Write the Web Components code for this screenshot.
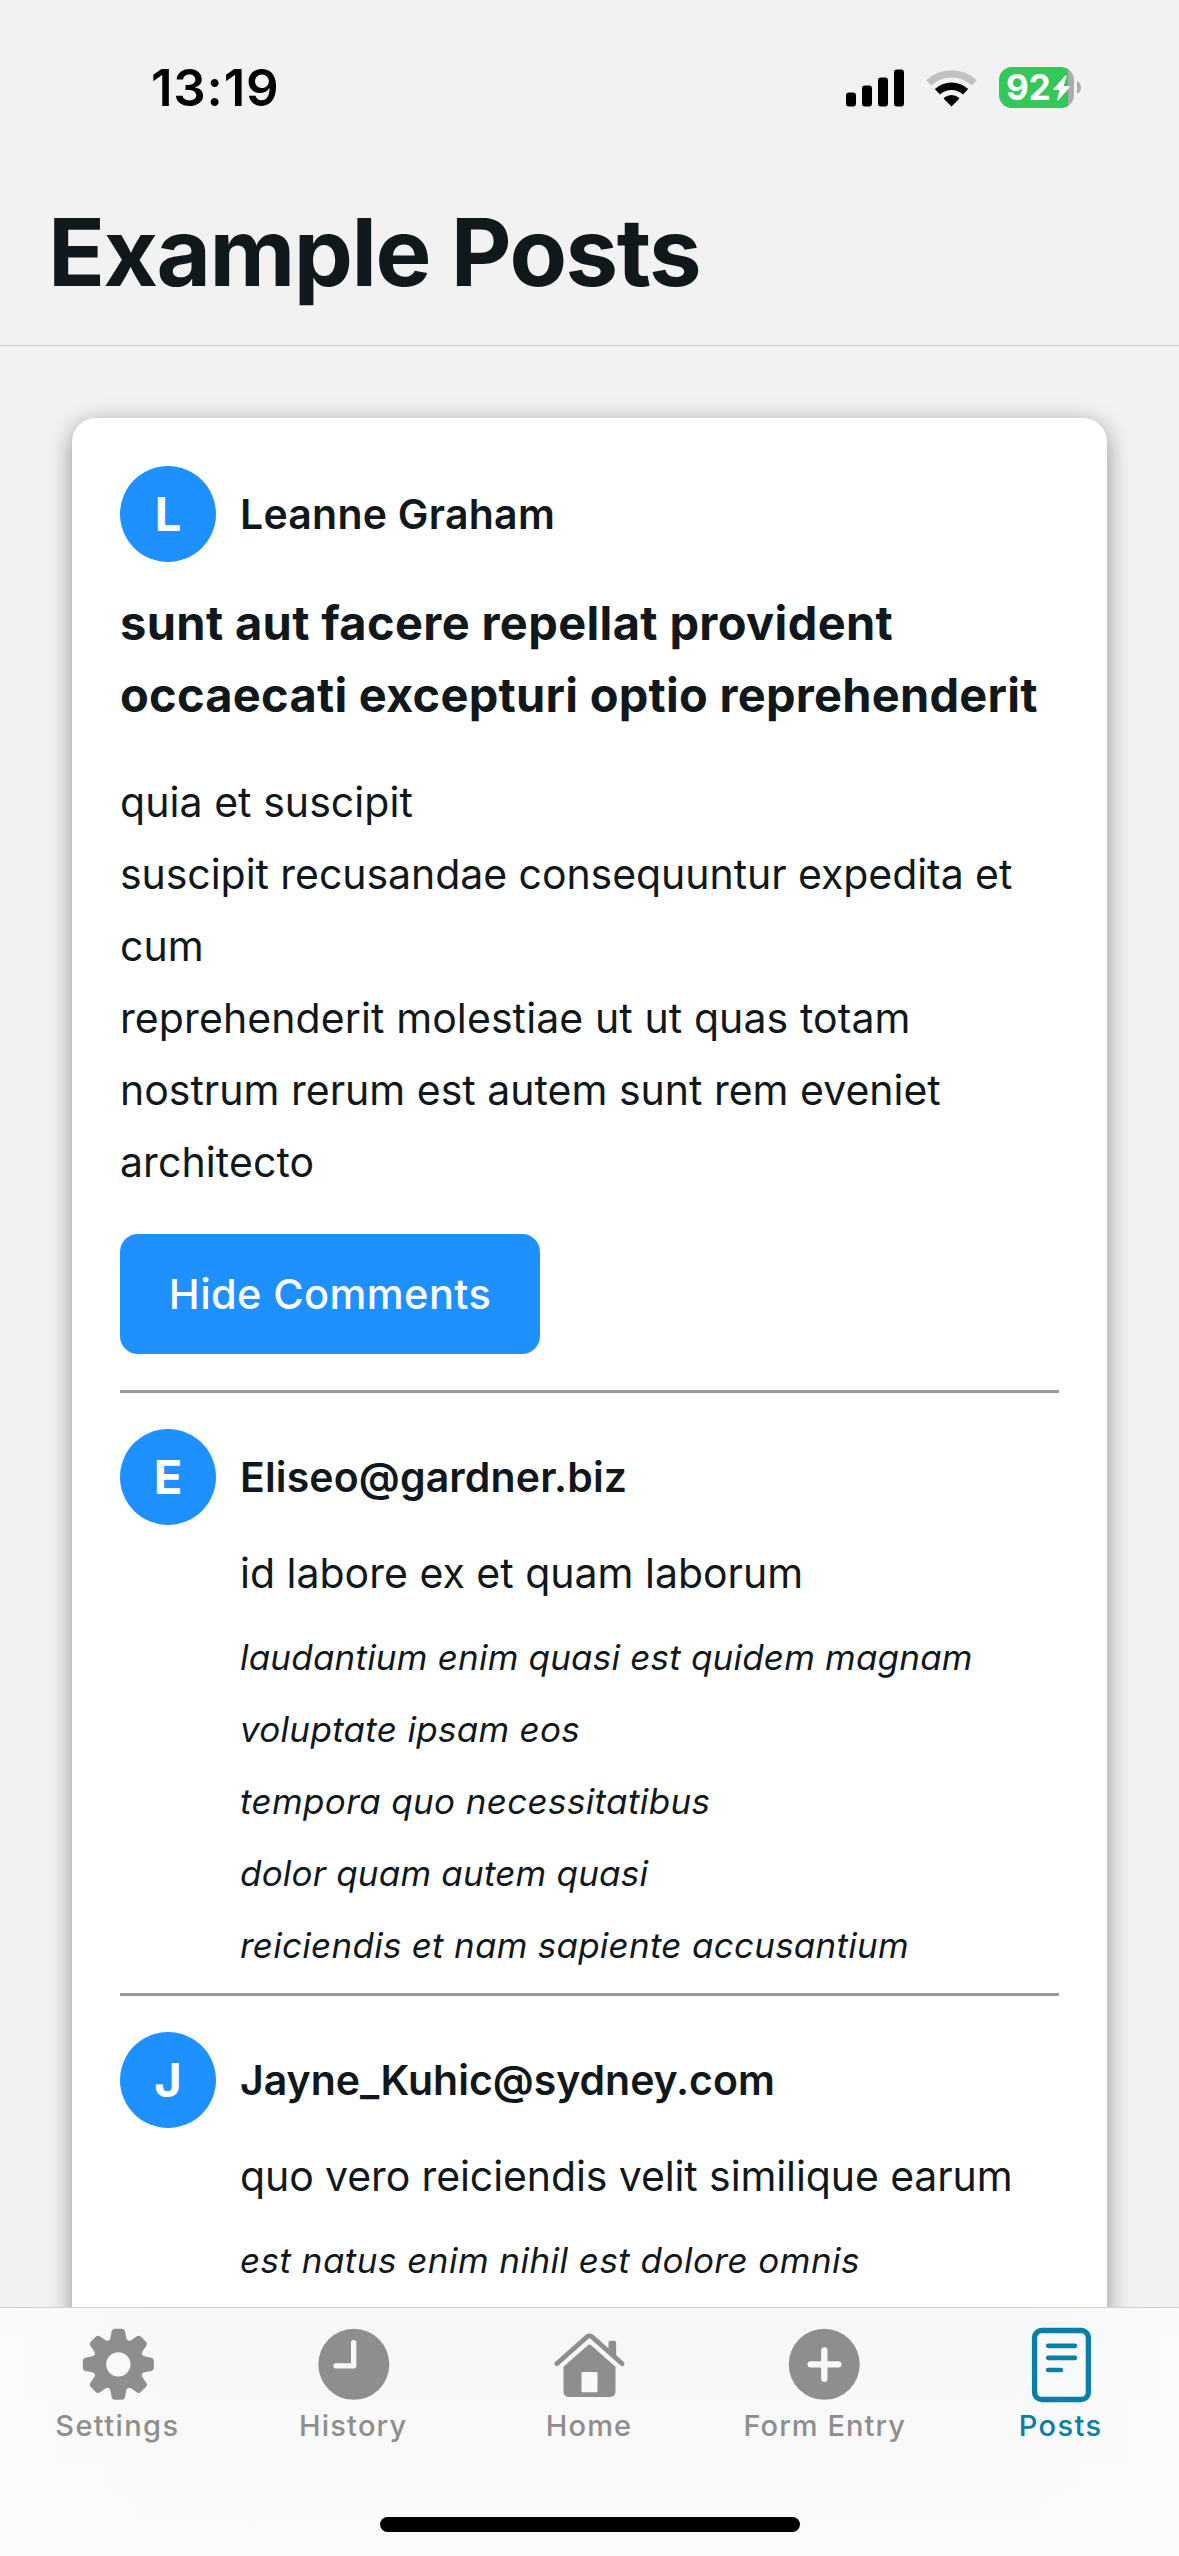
<!DOCTYPE html>
<html lang="en">
<head>
<meta charset="utf-8">
<title>Example Posts</title>
<style>
html, body { margin: 0; padding: 0; }
body { width: 1179px; height: 2556px; overflow: hidden; background: #f2f2f2; color: #11181c; font-family: Inter, "Liberation Sans", sans-serif; font-size: 41px; line-height: 72px; }
</style>
</head>
<body>
<posts-app>
  <status-bar slot="header" time="13:19" battery="92"></status-bar>
  <screen-title slot="header">Example Posts</screen-title>
  <post-card author="Leanne Graham" spacing="0.25px">
    <text-line slot="title" spacing="0.35px">sunt aut facere repellat provident</text-line>
    <text-line slot="title" spacing="0.24px">occaecati excepturi optio reprehenderit</text-line>
    <text-line slot="body" spacing="0.06px">quia et suscipit</text-line>
    <text-line slot="body" spacing="-0.055px">suscipit recusandae consequuntur expedita et</text-line>
    <text-line slot="body">cum</text-line>
    <text-line slot="body" spacing="0.1px">reprehenderit molestiae ut ut quas totam</text-line>
    <text-line slot="body">nostrum rerum est autem sunt rem eveniet</text-line>
    <text-line slot="body" spacing="0.1px">architecto</text-line>
    <post-comment slot="comments" email="Eliseo@gardner.biz" spacing="0.13px">
      <text-line slot="name">id labore ex et quam laborum</text-line>
      <text-line spacing="0.2px">laudantium enim quasi est quidem magnam</text-line>
      <text-line spacing="0.3px">voluptate ipsam eos</text-line>
      <text-line spacing="0.36px">tempora quo necessitatibus</text-line>
      <text-line spacing="0.2px">dolor quam autem quasi</text-line>
      <text-line spacing="0.26px">reiciendis et nam sapiente accusantium</text-line>
    </post-comment>
    <post-comment slot="comments" email="Jayne_Kuhic@sydney.com" spacing="-0.02px">
      <text-line slot="name" spacing="-0.1px">quo vero reiciendis velit similique earum</text-line>
      <text-line spacing="0.46px">est natus enim nihil est dolore omnis</text-line>
    </post-comment>
  </post-card>
  <tab-bar slot="footer">
    <tab-item spacing="1.4px">
      <svg slot="icon" viewBox="-5.5 0 300 300" fill="currentColor"><defs><path id="tooth" d="M-30-60V-70Q-25-72-24-78L-20-99Q-18-106.500-11-106.500H11Q18-106.500 20-99L24-78Q25-72 30-70V-60Z"/></defs><g transform="translate(145.500 163)"><circle r="56.500" fill="none" stroke="currentColor" stroke-width="40"/><use href="#tooth"/><use href="#tooth" transform="rotate(45)"/><use href="#tooth" transform="rotate(90)"/><use href="#tooth" transform="rotate(135)"/><use href="#tooth" transform="rotate(180)"/><use href="#tooth" transform="rotate(225)"/><use href="#tooth" transform="rotate(270)"/><use href="#tooth" transform="rotate(315)"/></g></svg>
      Settings</tab-item>
    <tab-item spacing="1.2px">
      <svg slot="icon" viewBox="0 0 300 300"><circle cx="149.500" cy="163" r="106.500" fill="currentColor"/><path d="M149 98V167.500H96" fill="none" stroke="#f8f8f8" stroke-width="16" stroke-linecap="round" stroke-linejoin="round"/></svg>
      History</tab-item>
    <tab-item spacing="1.2px">
      <svg slot="icon" viewBox="-1.5 0 300 300"><path d="M52 161L143 80Q150 75 157 80L248 161" fill="none" stroke="currentColor" stroke-width="14" stroke-linecap="round"/><path d="M207 126V98Q207 92 213 92H224Q230 92 230 98V147Z" fill="currentColor"/><path fill-rule="evenodd" fill="currentColor" d="M72 170L146 105Q150 102 154 105L228 170V243Q228 261 210 261H90Q72 261 72 243ZM129 186Q126 186 126 189V244Q126 247 129 247H171Q174 247 174 244V189Q174 186 171 186Z"/></svg>
      Home</tab-item>
    <tab-item spacing="1.08px">
      <svg slot="icon" viewBox="0 0 300 300"><circle cx="147.700" cy="163" r="106.500" fill="currentColor"/><path d="M148 121V206M107 163H190" fill="none" stroke="#f8f8f8" stroke-width="19" stroke-linecap="round"/></svg>
      Form Entry</tab-item>
    <tab-item spacing="1.4px" active>
      <svg slot="icon" viewBox="3.3 0 300 300" fill="none" stroke="currentColor"><rect x="74" y="61.500" width="161.500" height="207" rx="21" stroke-width="16"/><path d="M115 107.500H195M115 143.500H195M115 180H153" stroke-width="14" stroke-linecap="round"/></svg>
      Posts</tab-item>
  </tab-bar>
</posts-app>
<script>
const define = (name, html, setup) => {
  const template = document.createElement('template');
  template.innerHTML = html;
  customElements.define(name, class extends HTMLElement {
    connectedCallback() {
      if (this.shadowRoot) return;
      const root = this.attachShadow({ mode: 'open' });
      root.append(template.content.cloneNode(true));
      if (setup) setup(this, root);
    }
  });
};

define('posts-app', `
<style>
:host { display: flex; flex-direction: column; width: 1179px; height: 2556px; overflow: hidden; }
header { flex: none; height: 345px; border-bottom: 1px solid #cccccc; }
main { flex: 1; min-height: 0; overflow: hidden; padding: 72px 72px 0; }
</style>
<header><slot name="header"></slot></header>
<main><slot></slot></main>
<slot name="footer"></slot>`);

define('text-line', `
<style>:host { display: block; white-space: nowrap; }</style>
<slot></slot>`, (el) => { el.style.letterSpacing = el.getAttribute('spacing') || '0'; });

define('status-bar', `
<style>
:host { display: flex; justify-content: space-between; align-items: center; height: 175px; padding: 0 98px 0 151px; box-sizing: border-box; color: #000; }
.time { font-size: 51px; font-weight: 600; letter-spacing: 0.8px; }
.icons { display: flex; align-items: center; }
svg { display: block; }
.wifi { margin: 0 22px; }
.battery { display: flex; align-items: center; gap: 3px; }
.cell { display: flex; align-items: center; box-sizing: border-box; width: 75px; height: 41px; padding-left: 7px; border-radius: 13px; background: linear-gradient(90deg, #34c759 69px, #acacac 69px); color: #fff; font-size: 35px; font-weight: 700; line-height: 41px; }
.cell svg { margin-left: 2px; }
</style>
<span class="time"></span>
<div class="icons">
  <svg width="58" height="38" viewBox="0 0 58 38"><rect y="23.500" width="10" height="14" rx="3"/><rect x="16" y="16.500" width="10" height="21" rx="3"/><rect x="32" y="8.500" width="10" height="29" rx="3"/><rect x="48" y=".5" width="10" height="37" rx="3"/></svg>
  <svg class="wifi" width="51" height="38" viewBox="0 0 51 38"><path d="M2.800 13.800A33.100 33.100 0 0 1 48.200 13.800" fill="none" stroke="#c1c1c1" stroke-width="7.300"/><path d="M11.400 22.800A20.400 20.400 0 0 1 39.600 22.800" fill="none" stroke="#000" stroke-width="7.500"/><path d="M25.500 37.500L18 30Q17.400 29.300 18.100 28.700A11.600 11.600 0 0 1 32.900 28.700Q33.600 29.300 33 30Z"/></svg>
  <div class="battery"><div class="cell"><span></span><svg width="17" height="26" viewBox="0 0 17 26"><path d="M12.600.3L.4 14Q0 15 1 15H6.500L4.200 24.800Q4.300 26 5.200 25.400L16.700 12.200Q17.100 11 16 11H10.800L13.600 1Q13.500 0 12.600.3Z" fill="#fff"/></svg></div>
  <svg width="4" height="13" viewBox="0 0 4 13"><path d="M0 0Q4 2 4 6.500T0 13Z" fill="#acacac"/></svg></div>
</div>`, (el, root) => {
  root.querySelector('.time').textContent = el.getAttribute('time');
  root.querySelector('.cell span').textContent = el.getAttribute('battery');
});

define('screen-title', `
<style>
:host { display: block; padding-top: 3px; }
h1 { margin: 0; padding-left: 48px; font-size: 94px; line-height: 149px; font-weight: 700; letter-spacing: -1.5px; }
</style>
<h1><slot></slot></h1>`);

define('user-badge', `
<style>
:host { display: flex; align-items: center; gap: 24px; height: 96px; font-weight: 600; white-space: nowrap; }
.avatar { flex: none; width: 96px; height: 96px; border-radius: 50%; background: #1e90ff; color: #fff; font-size: 47px; line-height: 96px; font-weight: 700; text-align: center; }
</style>
<span class="avatar"></span><span class="name"></span>`, (el, root) => {
  const name = el.getAttribute('name');
  root.querySelector('.avatar').textContent = name[0];
  const label = root.querySelector('.name');
  label.textContent = name;
  label.style.letterSpacing = el.getAttribute('spacing');
});

define('post-card', `
<style>
:host { display: block; box-sizing: border-box; height: 2400px; padding: 48px; border-radius: 24px; background: #fff; box-shadow: 0 6px 24px rgba(0, 0, 0, .4); }
.title { margin-top: 25px; font-size: 47px; font-weight: 700; }
.body { margin: 35px 0 36px; }
button { display: flex; align-items: center; justify-content: center; width: 420px; height: 120px; margin: 0 0 36px; padding: 0; border: 0; border-radius: 18px; background: #1e90ff; color: #fff; font: 550 41.5px Inter, "Liberation Sans", sans-serif; letter-spacing: .4px; }
</style>
<div class="badge"></div>
<div class="title"><slot name="title"></slot></div>
<div class="body"><slot name="body"></slot></div>
<button>Hide Comments</button>
<slot name="comments"></slot>`, (el, root) => {
  const badge = document.createElement('user-badge');
  badge.setAttribute('name', el.getAttribute('author'));
  badge.setAttribute('spacing', el.getAttribute('spacing'));
  root.querySelector('.badge').append(badge);
});

define('post-comment', `
<style>
:host { display: block; border-top: 3px solid #999; padding: 36px 0 12px; }
.name { margin: 12px 0 12px 120px; }
.text { margin-left: 120px; font-size: 35px; font-style: italic; }
</style>
<div class="badge"></div>
<div class="name"><slot name="name"></slot></div>
<div class="text"><slot></slot></div>`, (el, root) => {
  const badge = document.createElement('user-badge');
  badge.setAttribute('name', el.getAttribute('email'));
  badge.setAttribute('spacing', el.getAttribute('spacing'));
  root.querySelector('.badge').append(badge);
});

define('tab-bar', `
<style>
:host { position: relative; flex: none; display: flex; flex-direction: column; justify-content: space-between; align-items: center; box-sizing: border-box; height: 249px; padding: 2px 0 24px; border-top: 1px solid #d0d0d0; background: linear-gradient(90deg, rgba(252,252,252,.7), rgba(252,252,252,0) 15%, rgba(252,252,252,0) 85%, rgba(252,252,252,.7)), linear-gradient(#f7f7f7, #fbfbfb); }
nav { display: flex; width: 100%; }
.home { width: 420px; height: 15px; border-radius: 8px; background: #000; }
</style>
<nav><slot></slot></nav>
<div class="home"></div>`);

define('tab-item', `
<style>
:host { flex: 1 1 0; min-width: 0; display: flex; flex-direction: column; align-items: center; color: #8e8e8e; font-size: 29px; line-height: 32px; font-weight: 500; white-space: nowrap; }
:host([active]) { color: #0a7ea4; }
::slotted(svg) { display: block; width: 100px; height: 100px; }
span { padding-right: 1px; }
</style>
<slot name="icon"></slot>
<span><slot></slot></span>`, (el) => { el.style.letterSpacing = el.getAttribute('spacing'); });
</script>
</body>
</html>
